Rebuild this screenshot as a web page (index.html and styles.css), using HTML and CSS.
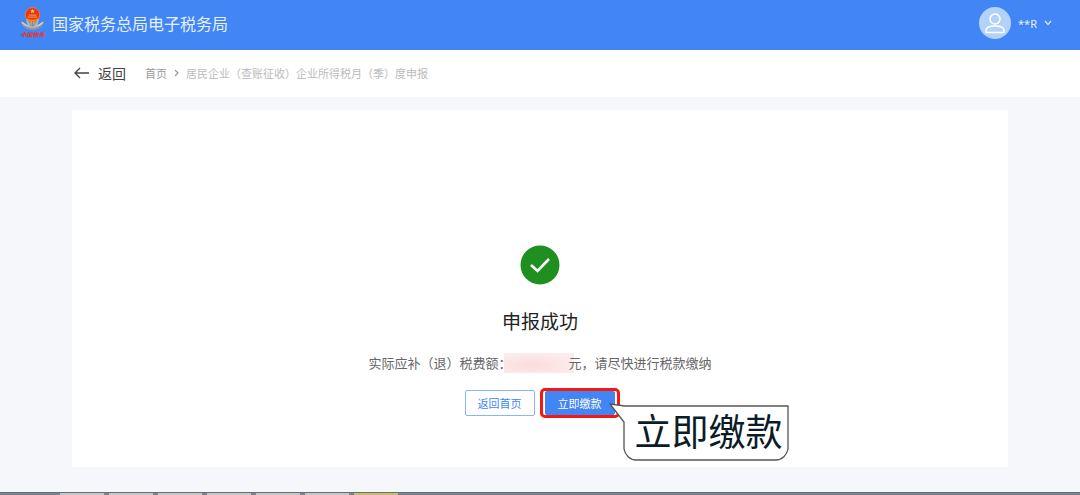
FILE: index.html
```html
<!DOCTYPE html>
<html lang="zh-CN">
<head>
    <meta charset="UTF-8">
    <meta name="viewport" content="width=device-width, initial-scale=1">
    <title>国家税务总局电子税务局</title>
    <link rel="stylesheet" href="styles.css">
</head>
<body>

    <header class="topbar">
        <div class="brand">
            <div class="logo">
                <svg class="emblem" viewBox="0 0 26 24" aria-hidden="true">
                    <path d="M1 14 C3 18 6 19 9 19 L13 22 L17 19 C20 19 23 18 25 14 C25 21 19 23 13 24 C7 23 1 21 1 14Z" fill="#8b98ad"/>
                    <path d="M2 16 Q6 20 12 21 M24 16 Q20 20 14 21" fill="none" stroke="#d5d3cb" stroke-width="1.4"/>
                    <path d="M6 12 H20 L18 20 L13 22 L8 20Z" fill="#b5b2ac"/>
                    <path d="M9 14 L12 20 M17 14 L14 20 M13 14 V20" stroke="#7f858f" stroke-width="1"/>
                    <circle cx="13" cy="8" r="7.5" fill="#e5341e" stroke="#e8803a" stroke-width="1"/>
                    <path d="M13 2 l.8 1.5 1.7.2 -1.2 1.1 .3 1.6 -1.6-.8 -1.6.8 .3-1.6 -1.2-1.1 1.7-.2Z" fill="#ffc83c"/>
                    <path d="M9 8.5 H17 M8 10.5 H18 M7 12.5 Q13 15.5 19 12.5" fill="none" stroke="#f6902c" stroke-width="1.2"/>
                </svg>
                <span class="logo-text">中国税务</span>
            </div>
            <span class="site-name">国家税务总局电子税务局</span>
        </div>
        <button class="user" type="button">
            <svg class="avatar" viewBox="0 0 32 32" aria-hidden="true">
                <circle cx="16" cy="16" r="16" fill="#b3d2fa"/>
                <circle cx="16" cy="12" r="5" fill="none" stroke="#fff" stroke-width="1.5"/>
                <path d="M7 25.5 V23.5 C7 20.5 11 19 16 19 S25 20.5 25 23.5 V25.5Z" fill="none" stroke="#fff" stroke-width="1.5" stroke-linejoin="round"/>
            </svg>
            <span>**R</span>
            <svg class="caret" viewBox="0 0 8 6" aria-hidden="true">
                <path d="M1 1 L4 4.5 L7 1" fill="none" stroke="#d9e8ff" stroke-width="1.2"/>
            </svg>
        </button>
    </header>

    <nav class="crumbbar">
        <a class="back" href="#">
            <svg class="arrow" viewBox="0 0 15 12" aria-hidden="true">
                <path d="M15 6 H1 M6 1 L1 6 L6 11" fill="none" stroke="#444" stroke-width="1.3"/>
            </svg>
            返回
        </a>
        <div class="crumbs">
            <a href="#">首页</a>
            <svg class="sep" viewBox="0 0 5 8" aria-hidden="true">
                <path d="M1 1 L4 4 L1 7" fill="none" stroke="#999" stroke-width="1.2"/>
            </svg>
            <span>居民企业（查账征收）企业所得税月（季）度申报</span>
        </div>
    </nav>

    <main class="content">
        <section class="card">
            <svg class="success" viewBox="0 0 40 40" aria-hidden="true">
                <circle cx="20" cy="20" r="19.5" fill="#1f8f1f"/>
                <path d="M11 20 L17.5 26 L29 14" fill="none" stroke="#fff" stroke-width="2.6"/>
            </svg>
            <h1>申报成功</h1>
            <p class="amount">实际应补（退）税费额：<span class="mask"></span>元，请尽快进行税款缴纳</p>
            <div class="actions">
                <button class="btn" type="button">返回首页</button>
                <div class="highlight">
                    <button class="btn btn-primary" type="button">立即缴款</button>
                    <div class="callout">
                        <svg class="bubble" viewBox="0 0 180 60" aria-hidden="true">
                            <path d="M1 1 L15 19 V46 C16 52 21 57 27 57 H167 C173 57 178 52 179 46 V3 H16Z" fill="#fff" stroke="#555" stroke-width="1.3"/>
                        </svg>
                        <span class="callout-text">立即缴款</span>
                    </div>
                </div>
            </div>
        </section>
    </main>

    <footer class="taskbar">
        <span></span>
        <span></span>
        <span></span>
        <span></span>
        <span></span>
        <span></span>
        <span class="active"></span>
    </footer>

</body>
</html>
```

FILE: styles.css
```css
* {
    box-sizing: border-box;
}

body {
    margin: 0;
    min-height: 100vh;
    display: flex;
    flex-direction: column;
    background-color: #f5f7fa;
    color: #666;
    font-family: "Noto Sans CJK SC", sans-serif;
    font-size: 13px;
}

a {
    color: inherit;
    text-decoration: none;
}

button {
    font-family: inherit;
    cursor: pointer;
}

svg {
    display: block;
    flex: none;
}

.topbar {
    height: 50px;
    padding: 0 28px 4px 20px;
    display: flex;
    align-items: center;
    justify-content: space-between;
    background-color: #4285f4;
    color: #fff;
}

.brand {
    display: flex;
    align-items: center;
    gap: 7px;
}

.logo {
    width: 25px;
    display: flex;
    flex-direction: column;
    align-items: center;
    gap: 1px;
}

.emblem {
    width: 25px;
    height: 23px;
}

.logo-text {
    color: #e0352b;
    font-size: 6px;
    font-weight: bold;
    font-style: italic;
    line-height: 8px;
    white-space: nowrap;
}

.site-name {
    color: #e6f0ff;
    font-size: 16px;
}

.user {
    display: flex;
    align-items: center;
    gap: 7px;
    padding: 0;
    border: none;
    background: none;
    color: #e6f0ff;
    font-family: "Noto Sans", sans-serif;
    font-size: 11px;
}

.avatar {
    width: 32px;
    height: 32px;
}

.caret {
    width: 8px;
    height: 6px;
}

.crumbbar {
    height: 47px;
    padding: 0 74px 2px;
    display: flex;
    align-items: center;
    gap: 19px;
    background-color: #fff;
}

.back {
    display: flex;
    align-items: center;
    gap: 9px;
    color: #444;
    font-size: 14px;
}

.arrow {
    width: 15px;
    height: 12px;
}

.crumbs {
    display: flex;
    align-items: center;
    gap: 7px;
    color: #bbb;
    font-size: 11px;
}

.crumbs a {
    color: #999;
}

.sep {
    width: 5px;
    height: 8px;
}

.content {
    flex: 1;
    display: flex;
    padding: 13px 72px 25px;
}

.card {
    flex: 1;
    display: flex;
    flex-direction: column;
    align-items: center;
    padding: 135px 0 47px;
    background-color: #fff;
}

.success {
    width: 40px;
    height: 40px;
}

h1 {
    margin: 22px 0 0;
    color: #222;
    font-size: 19px;
    font-weight: normal;
    line-height: 28px;
}

.amount {
    display: flex;
    align-items: center;
    margin: 17px 0 14px;
    line-height: 22px;
}

/* blurred-out amount, laps over the characters beside it */
.mask {
    width: 70px;
    height: 20px;
    margin: 0 -5px 0 -8px;
    background: radial-gradient(ellipse at 40% 60%, #fbdcdc, #fbe9e9 60%, #f9efef);
}

.actions {
    display: flex;
    align-items: center;
    gap: 5px;
    padding-left: 4px;
}

.btn {
    width: 70px;
    height: 26px;
    padding: 0;
    border: 1px solid #8bb4f8;
    border-radius: 2px;
    background-color: #fff;
    color: #4285f4;
    font-size: 11px;
}

.btn-primary {
    border-color: #4285f4;
    background-color: #4285f4;
    color: #fff;
}

/* red frame around the button to press */
.highlight {
    position: relative;
    display: flex;
    padding: 0 2px;
    border: 3px solid #f5190f;
    border-radius: 5px;
}

.highlight .btn {
    height: 24px;
}

.callout {
    position: absolute;
    top: 12px;
    left: 66px;
    width: 180px;
    height: 60px;
}

.bubble {
    width: 180px;
    height: 60px;
}

.callout-text {
    position: absolute;
    inset: 1px 2px 3px 26px;
    color: #0b1c28;
    font-size: 37px;
    font-weight: 400;
    line-height: 52px;
    white-space: nowrap;
}

.taskbar {
    height: 3px;
    padding-left: 60px;
    display: flex;
    gap: 5px;
    border-top: 1px solid #686d76;
    background-color: #7c838e;
}

.taskbar span {
    width: 44px;
    background-color: #c8c6c6;
}

.taskbar .active {
    background-color: #c9bd75;
}
```
